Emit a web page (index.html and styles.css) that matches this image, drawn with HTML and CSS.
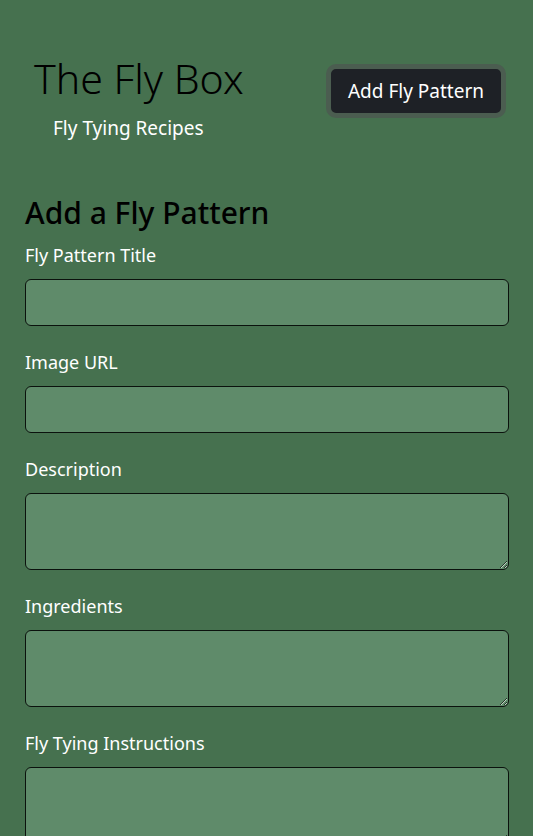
FILE: index.html
```html
<!DOCTYPE html>
<html lang="en">
<head>
<meta charset="utf-8">
<title>The Fly Box</title>
<link rel="stylesheet" href="styles.css">
</head>
<body>
<header class="top">
  <div class="brand">
    <h1 class="brand-title">The Fly Box</h1>
    <p class="brand-sub">Fly Tying Recipes</p>
  </div>
  <button class="btn-add" type="button">Add Fly Pattern</button>
</header>
<main class="content">
  <h2 class="form-title">Add a Fly Pattern</h2>
  <form class="fly-form">
    <label class="field-label" for="title">Fly Pattern Title</label>
    <input class="field" id="title" type="text">
    <label class="field-label" for="img">Image URL</label>
    <input class="field" id="img" type="text">
    <label class="field-label" for="desc">Description</label>
    <textarea class="field area" id="desc"></textarea>
    <label class="field-label" for="ing">Ingredients</label>
    <textarea class="field area" id="ing"></textarea>
    <label class="field-label" for="ins">Fly Tying Instructions</label>
    <textarea class="field area" id="ins"></textarea>
  </form>
</main>
</body>
</html>
```

FILE: styles.css
```css
* { box-sizing: border-box; }
html, body { margin: 0; padding: 0; }
body {
  background: #46714f;
  font-family: "Noto Sans", "Open Sans", sans-serif;
  color: #fff;
  height: 836px;
  overflow: hidden;
}
.top {
  display: flex;
  justify-content: space-between;
  align-items: flex-start;
  padding: 52px 27px 0 34px;
}
.brand-title {
  margin: 0;
  font-weight: 300;
  font-size: 41px;
  line-height: 52px;
  color: #000;
}
.brand-sub {
  margin: 11px 0 0 19px;
  font-size: 19px;
  line-height: 26px;
}
.btn-add {
  margin-top: 12px;
  background: #1e2126;
  color: #fff;
  border: 5px solid #4b5d50;
  border-radius: 10px;
  font-family: inherit;
  font-size: 19px;
  padding: 0 17px;
  height: 54px;
}
.content {
  padding: 53px 24px 0 25px;
}
.form-title {
  margin: 0 0 10px;
  font-size: 30px;
  font-weight: 500;
  line-height: 38px;
  color: #000;
}
.fly-form {
  display: flex;
  flex-direction: column;
}
.field-label {
  font-size: 18px;
  line-height: 26px;
  margin-bottom: 11px;
}
.field {
  background: #5f8b6a;
  border: 1px solid #0b120d;
  border-radius: 6px;
  height: 47px;
  margin-bottom: 23px;
  width: 100%;
}
.area {
  height: 77px;
  resize: vertical;
}
```
